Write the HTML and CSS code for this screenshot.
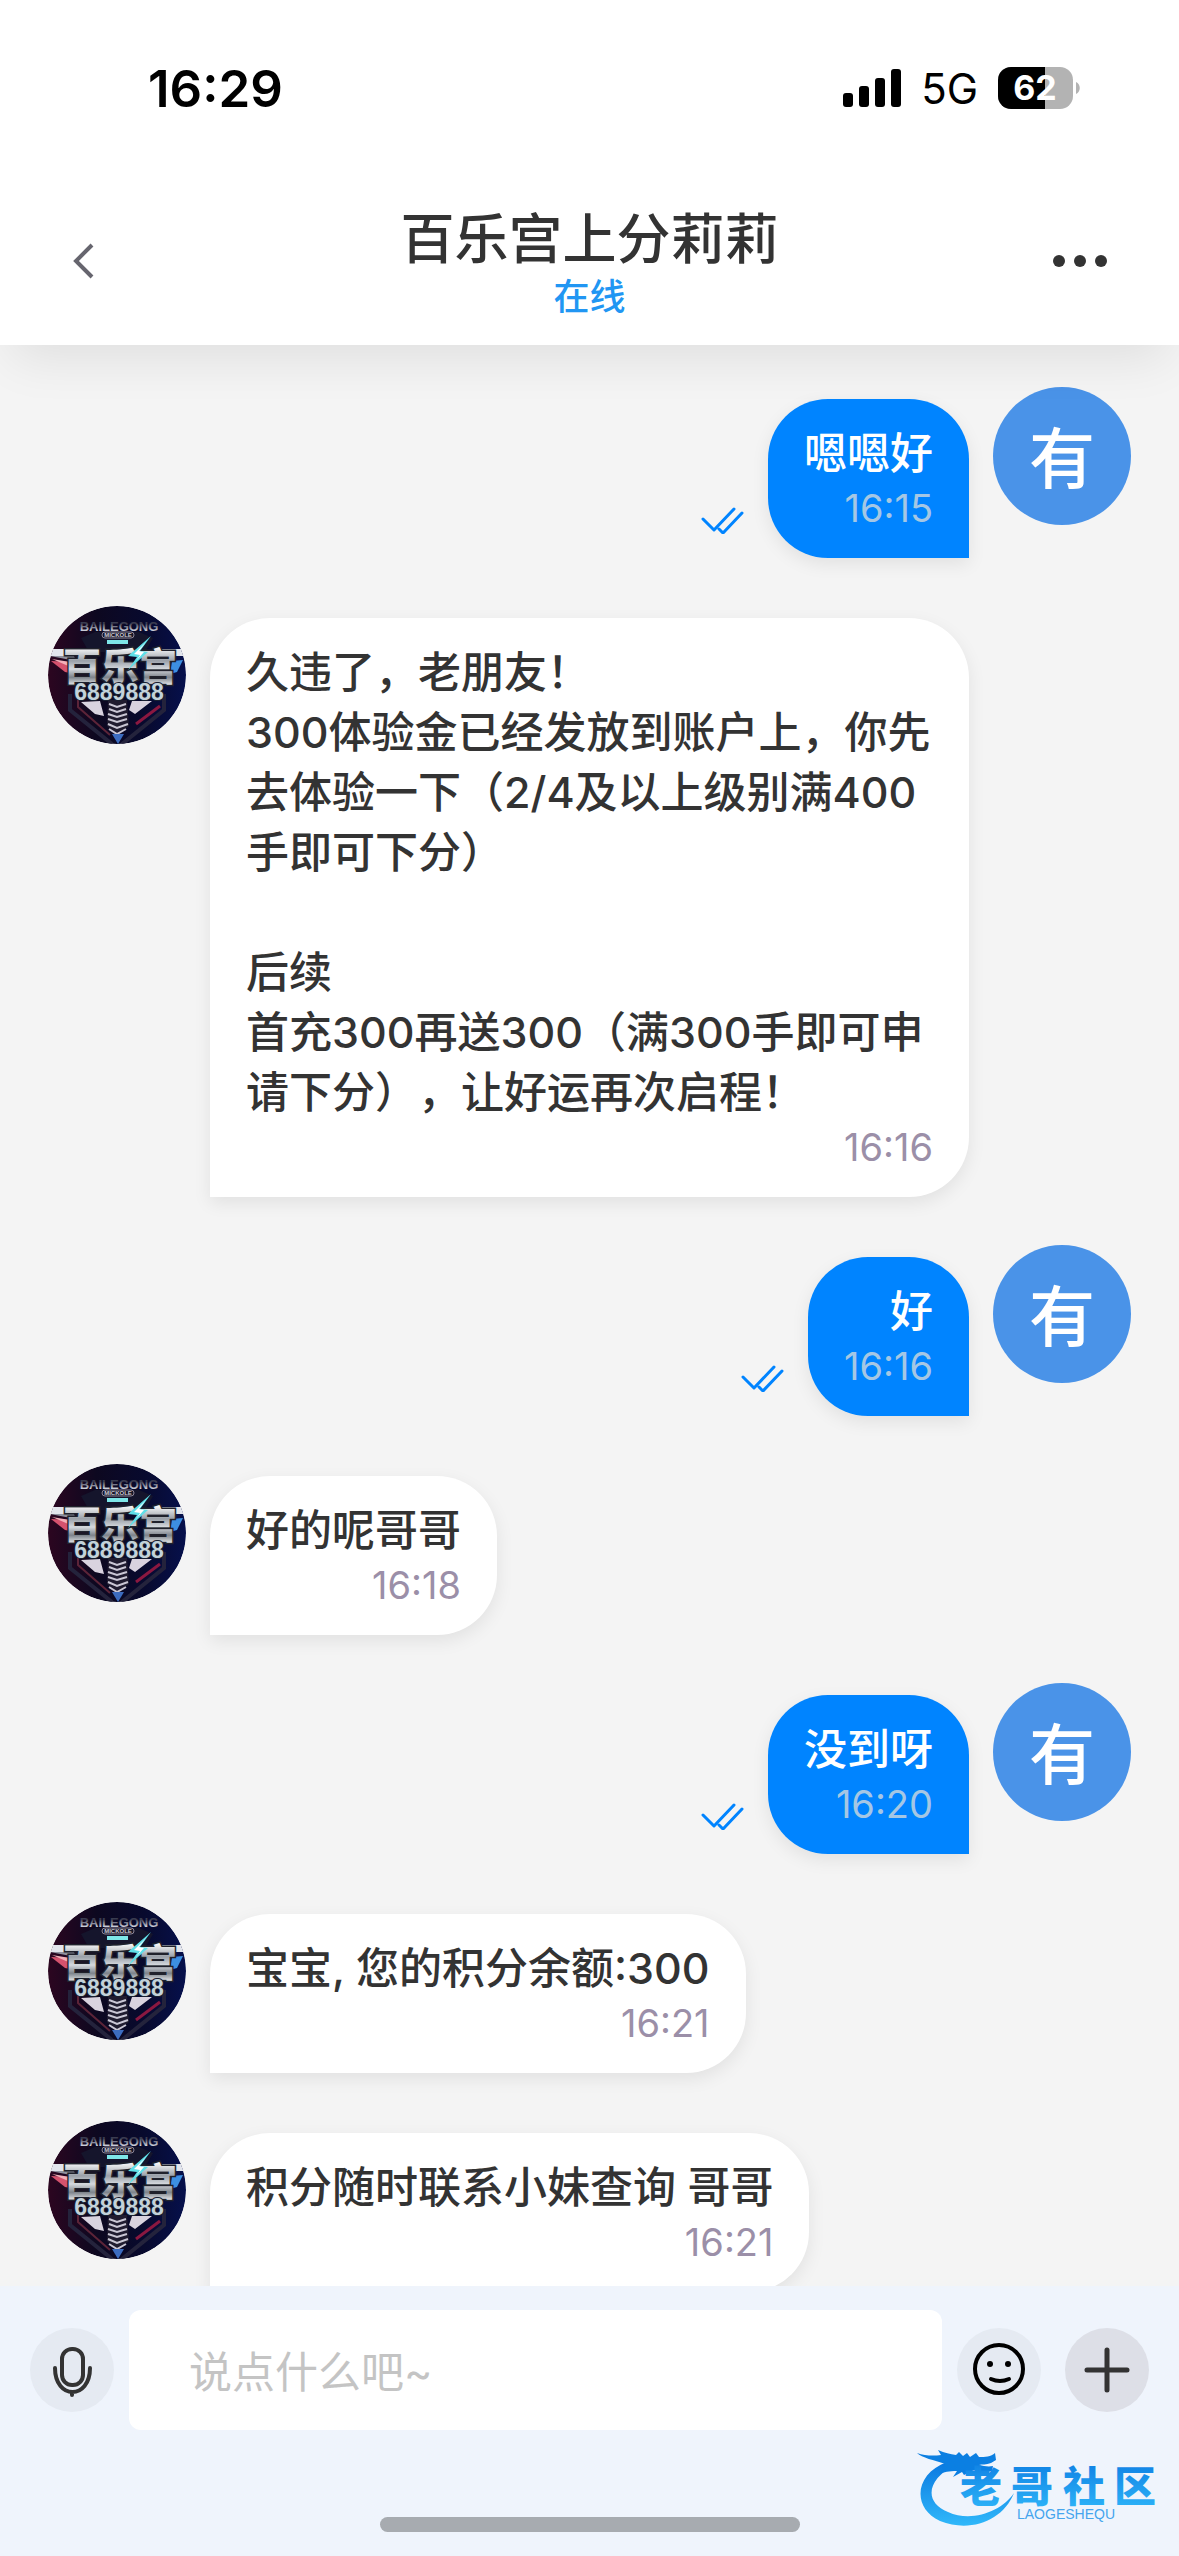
FILE: index.html
```html
<!DOCTYPE html>
<html lang="zh-CN">
<head>
<meta charset="utf-8">
<meta name="viewport" content="width=device-width, initial-scale=1">
<title>百乐宫上分莉莉</title>
<link rel="stylesheet" href="styles.css">
</head>
<body>
<svg class="sprite" aria-hidden="true">
  <defs>
    <linearGradient id="night" x1="0" y1="0" x2="1" y2="0">
      <stop offset="0" stop-color="#2c0620"/><stop offset=".35" stop-color="#0d0820"/><stop offset=".7" stop-color="#080a2e"/><stop offset="1" stop-color="#06104c"/>
    </linearGradient>
    <linearGradient id="chrome" x1="0" y1="0" x2="0" y2="1">
      <stop offset=".2" stop-color="#fff"/><stop offset=".45" stop-color="#9aa0a8"/><stop offset=".6" stop-color="#d5d9de"/><stop offset=".75" stop-color="#7d838b"/><stop offset=".9" stop-color="#eceef0"/>
    </linearGradient>
    <linearGradient id="steel" x1="0" y1="0" x2="0" y2="1">
      <stop offset=".3" stop-color="#3a3c50"/><stop offset=".85" stop-color="#e2e4ee"/>
    </linearGradient>
    <linearGradient id="ocean" x1="0" y1="0" x2="0" y2="1">
      <stop offset="0" stop-color="#0a78e0"/><stop offset="1" stop-color="#30b8fa"/>
    </linearGradient>
    <clipPath id="disc"><circle cx="69" cy="69" r="69"/></clipPath>
  </defs>
  <symbol id="read" viewBox="0 0 43 27">
    <path d="M2 12l11 11L33 2M18 22l4 4L41 6" fill="none" stroke="currentColor" stroke-width="3" stroke-linecap="round" stroke-linejoin="round"/>
  </symbol>
</svg>

<header class="top">
  <div class="status">
    <span class="clock">16:29</span>
    <div class="signals">
      <svg class="bars" viewBox="0 0 58 38" aria-label="信号">
        <rect x="0" y="24" width="10" height="14" rx="3"/><rect x="16" y="17" width="10" height="21" rx="3"/><rect x="32" y="9" width="10" height="29" rx="3"/><rect x="48" y="0" width="10" height="38" rx="3"/>
      </svg>
      <span class="network">5G</span>
      <svg class="battery" viewBox="0 0 83 42">
        <defs><clipPath id="cell"><rect width="75" height="42" rx="13"/></clipPath></defs>
        <g clip-path="url(#cell)"><rect width="75" height="42" fill="#b3b3b3"/><rect width="47" height="42"/></g>
        <path d="M78 15c5 2 5 10 0 12z" fill="#b3b3b3"/>
        <text class="battery-level" x="37" y="33">62</text>
      </svg>
    </div>
  </div>
  <div class="titlebar">
    <button class="bar-button" type="button" aria-label="返回">
      <svg class="back" viewBox="0 0 22 36"><path d="M19 2L3 18l16 16" fill="none" stroke="#66656e" stroke-width="4"/></svg>
    </button>
    <div class="heading">
      <h1 class="title">百乐宫上分莉莉</h1>
      <p class="presence">在线</p>
    </div>
    <button class="bar-button menu" type="button" aria-label="更多">
      <svg class="more" viewBox="0 0 56 14" fill="#333"><circle cx="7" cy="7" r="6"/><circle cx="28" cy="7" r="6"/><circle cx="49" cy="7" r="6"/></svg>
    </button>
  </div>
</header>

<main class="chat">
  <article class="message mine">
    <div class="avatar">有</div>
    <div class="bubble"><p class="text">嗯嗯好</p><time class="time">16:15</time></div>
    <svg class="read"><use href="#read"/></svg>
  </article>
  <article class="message">
    <svg class="avatar" viewBox="0 0 138 138">
      <g id="agent" clip-path="url(#disc)">
        <rect width="138" height="138" fill="url(#night)"/>
        <path d="M33 32l14-6h44l14 6-8 14H41z" fill="#15152c"/>
        <path d="M22 88v16l42 34M116 88v16l-42 34" fill="none" stroke="#24233c" stroke-width="4"/>
        <path d="M30 92v9l32 28" fill="none" stroke="#5c2438" stroke-width="2"/>
        <path d="M112 100l-24 18" stroke="#8a1840" stroke-width="3"/>
        <path d="M33 96l19-1 4 15-9-2zM84 95l20 0-17 13-6-4z" fill="#d9d3df"/>
        <path d="M60 94h19l2 26-12 9-10-9z" fill="#201c30"/>
        <path d="M61 98l8 3 9-3M61 103l8 3 9-3M60 108l9 3 10-3M60 113l9 3 10-3M60 118l9 4 11-4M61 123l8 5 9-5" fill="none" stroke="#c9c6d4" stroke-width="2"/>
        <path d="M64 128h12l-6 10z" fill="#3c6cc0"/>
        <path d="M0 43h30l4 7H2zM138 43h-32l-2 7h32z" fill="#e2e5ec"/>
        <path d="M2 50h24l2 5z" fill="#8f93a0"/>
        <path d="M3 55l22 1 2 12-10-2z" fill="#d4526e"/>
        <path d="M4 53l18 3 3 6z" fill="#f3b0ba"/>
        <path d="M135 54l-11 1-2 13 7-2z" fill="#3d8fe2"/>
        <text class="agent-arch" x="71" y="25">BAILEGONG</text>
        <rect x="54" y="26" width="32" height="6" rx="3" fill="#141426" stroke="#8c8596" stroke-width="1"/>
        <text class="agent-ribbon" x="70" y="31">MICKOLE</text>
        <rect x="59" y="34" width="21" height="4" fill="#7ee6e8"/>
        <text class="agent-name" x="72" y="74">百乐宫</text>
        <path d="M103 30L80 50l9 1-9 13 20-18-8-1z" fill="#5fdfe8"/>
        <path d="M98 36L86 48l6 1-4 6 8-9-5-1z" fill="#fff"/>
        <text class="agent-number" x="71" y="94">6889888</text>
      </g>
    </svg>
    <div class="bubble"><p class="text">久违了，老朋友！
300体验金已经发放到账户上，你先去体验一下（2/4及以上级别满400手即可下分）

后续
首充300再送300（满300手即可申请下分），让好运再次启程！</p><time class="time">16:16</time></div>
  </article>
  <article class="message mine">
    <div class="avatar">有</div>
    <div class="bubble"><p class="text">好</p><time class="time">16:16</time></div>
    <svg class="read"><use href="#read"/></svg>
  </article>
  <article class="message">
    <svg class="avatar" viewBox="0 0 138 138"><use href="#agent"/></svg>
    <div class="bubble"><p class="text">好的呢哥哥</p><time class="time">16:18</time></div>
  </article>
  <article class="message mine">
    <div class="avatar">有</div>
    <div class="bubble"><p class="text">没到呀</p><time class="time">16:20</time></div>
    <svg class="read"><use href="#read"/></svg>
  </article>
  <article class="message">
    <svg class="avatar" viewBox="0 0 138 138"><use href="#agent"/></svg>
    <div class="bubble"><p class="text">宝宝, 您的积分余额:300</p><time class="time">16:21</time></div>
  </article>
  <article class="message">
    <svg class="avatar" viewBox="0 0 138 138"><use href="#agent"/></svg>
    <div class="bubble"><p class="text">积分随时联系小妹查询 哥哥</p><time class="time">16:21</time></div>
  </article>
</main>

<footer class="dock">
  <form class="composer">
    <button class="round" type="button" aria-label="语音">
      <svg class="icon" viewBox="0 0 84 84" fill="none" stroke="#333" stroke-width="4" stroke-linecap="round"><rect x="32" y="21" width="21" height="36" rx="10"/><path d="M25 41c0 32 35 32 35 0M42 65v3" transform="translate(0 -1)"/></svg>
    </button>
    <input class="entry" type="text" aria-label="消息" placeholder="说点什么吧~">
    <button class="round" type="button" aria-label="表情">
      <svg class="icon" viewBox="0 0 84 84" fill="none" stroke="#000" stroke-width="4" stroke-linecap="round"><circle cx="42" cy="41" r="24"/><circle cx="33" cy="36" r="3" fill="#000" stroke="none"/><circle cx="51" cy="36" r="3" fill="#000" stroke="none"/><path d="M34 51q9 4 18 0"/></svg>
    </button>
    <button class="round add" type="button" aria-label="添加">
      <svg class="icon" viewBox="0 0 84 84" fill="none" stroke="#333" stroke-width="5" stroke-linecap="round"><path d="M42 22v40M22 42h40"/></svg>
    </button>
  </form>
  <div class="home-indicator"></div>
  <svg class="community" viewBox="0 0 248 90" aria-label="老哥社区">
    <path d="M31 20C-2 32-4 66 24 79c30 12 63 0 74-28-12 18-42 30-66 19C8 60 10 38 40 22z" fill="url(#ocean)"/>
    <path d="M1 11c8 3 17 3 24 2l-3-5c7 3 12 4 18 5l3-3 4 4 4-3 3 4 6-4 3 4c6 0 12 0 16-4l1 7-5 3c-5 2-9 1-12 2 5 1 9 2 14 1l-1 5c-7 2-12-1-18-1l-10 5-2-3-9 5 4-6c-8 0-13 1-18 3l6-10C18 18 6 16 1 11z" fill="#0b7fe2"/>
    <text class="community-name" x="44 95 147 198" y="60">老哥社区</text>
    <text class="community-latin" x="101" y="77">LAOGESHEQU</text>
  </svg>
</footer>
</body>
</html>
```
FILE: styles.css
```css
* {
  box-sizing: border-box;
}

body {
  margin: 0;
  height: 100vh;
  display: flex;
  flex-direction: column;
  background: #f4f4f4;
  color: #333;
  font-family: Inter, "Noto Sans CJK SC", sans-serif;
}

h1,
p {
  margin: 0;
}

button {
  padding: 0;
  border: 0;
  background: none;
}

svg {
  display: block;
}

.sprite {
  position: absolute;
  width: 0;
  height: 0;
}

/* Header */

.top {
  position: relative;
  z-index: 1;
  flex: none;
  background: #fff;
  box-shadow: 0 24px 48px -12px rgba(0, 0, 0, 0.09);
}

.status {
  display: flex;
  justify-content: space-between;
  align-items: center;
  height: 176px;
  padding: 0 98px 0 148px;
  color: #000;
}

.clock {
  font-size: 51px;
  font-weight: 600;
}

.signals {
  display: flex;
  align-items: center;
  gap: 20px;
}

.bars {
  width: 58px;
  height: 38px;
}

.network {
  font-size: 42px;
}

.battery {
  width: 83px;
  height: 42px;
}

.battery-level {
  fill: #fff;
  font-size: 34px;
  font-weight: 700;
  text-anchor: middle;
}

.titlebar {
  display: grid;
  grid-template-columns: 1fr auto 1fr;
  align-items: center;
  height: 169px;
  padding: 0 48px;
}

.bar-button {
  display: flex;
  justify-content: center;
  align-items: center;
  width: 72px;
  height: 72px;
}

.menu {
  justify-self: end;
  margin-right: 15px;
}

.back {
  width: 22px;
  height: 36px;
}

.more {
  width: 56px;
  height: 14px;
  flex: none;
}

.heading {
  padding-top: 6px;
  text-align: center;
}

.title {
  font-size: 54px;
  font-weight: 500;
  line-height: 66px;
}

.presence {
  color: #2196f3;
  font-size: 36px;
  font-weight: 500;
  line-height: 48px;
}

/* Conversation */

.chat {
  flex: 1;
  min-height: 0;
  display: flex;
  flex-direction: column;
  gap: 48px;
  padding: 42px 48px 0;
  overflow-y: auto;
  scrollbar-width: none;
}

.message {
  flex: none;
  display: flex;
  align-items: flex-start;
  gap: 24px;
}

.mine {
  flex-direction: row-reverse;
}

.avatar {
  flex: none;
  width: 138px;
  height: 138px;
  border-radius: 50%;
}

.mine .avatar {
  padding-top: 3px;
  background: #4a93e8;
  color: #fff;
  font-size: 66px;
  font-weight: 500;
  line-height: 138px;
  text-align: center;
}

.bubble {
  max-width: calc(100% - 324px);
  margin-top: 12px;
  padding: 24px 36px;
  border-radius: 60px 60px 60px 0;
  background: #fff;
  box-shadow: 0 6px 18px rgba(0, 0, 0, 0.08);
}

.mine .bubble {
  border-radius: 60px 60px 0 60px;
  background: #0084ff;
  color: #fff;
  text-align: right;
}

.text {
  font-size: 43px;
  font-weight: 500;
  line-height: 60px;
  white-space: pre-wrap;
  text-spacing-trim: space-all;
}

.time {
  display: block;
  color: #9b8fa8;
  font-size: 38px;
  font-weight: 400;
  line-height: 51px;
  text-align: right;
}

.mine .time {
  color: #a5c7e4;
}

.read {
  flex: none;
  align-self: flex-end;
  width: 43px;
  height: 27px;
  margin-bottom: 24px;
  color: #0084ff;
}

/* Artwork lettering */

.agent-arch {
  fill: url(#steel);
  font: 700 13px "Liberation Sans", sans-serif;
  text-anchor: middle;
}

.agent-ribbon {
  fill: #c9c6d0;
  font: 700 6px "Liberation Sans", sans-serif;
  text-anchor: middle;
}

.agent-name {
  fill: url(#chrome);
  stroke: #20222c;
  stroke-width: 3px;
  paint-order: stroke;
  font: 900 38px "Noto Sans CJK SC", sans-serif;
  text-anchor: middle;
}

.agent-number {
  fill: #c3d2da;
  stroke: #182030;
  stroke-width: 2px;
  paint-order: stroke;
  font: 700 23px "Liberation Sans", sans-serif;
  text-anchor: middle;
}

.community-name {
  fill: url(#ocean);
  font: 900 42px "Noto Sans CJK SC", sans-serif;
}

.community-latin {
  fill: #45a5ee;
  font: 400 14px "Liberation Sans", sans-serif;
}

/* Composer */

.dock {
  position: relative;
  flex: none;
  display: flex;
  flex-direction: column;
  align-items: center;
  gap: 87px;
  padding: 24px 0;
  background: #eff4fc;
}

.composer {
  display: flex;
  align-items: center;
  gap: 15px;
  width: 100%;
  padding: 0 30px;
}

.round {
  flex: none;
  width: 84px;
  height: 84px;
  border-radius: 50%;
  background: #e5eaf2;
}

.add {
  margin-left: 9px;
  background: #dddfe7;
}

.icon {
  width: 84px;
  height: 84px;
}

.entry {
  flex: 1;
  min-width: 0;
  height: 120px;
  padding: 3px 60px 0;
  border: 0;
  border-radius: 12px;
  background: #fff;
  font-family: inherit;
  font-size: 43px;
}

.entry::placeholder {
  color: #c4c4c4;
  font-weight: 400;
}

.home-indicator {
  width: 36%;
  max-width: 420px;
  height: 15px;
  border-radius: 8px;
  background: #a7abb0;
}

/* The community mark floats over the corner of the dock. */
.community {
  position: absolute;
  right: 15px;
  bottom: 24px;
  width: 248px;
  height: 90px;
}
```
